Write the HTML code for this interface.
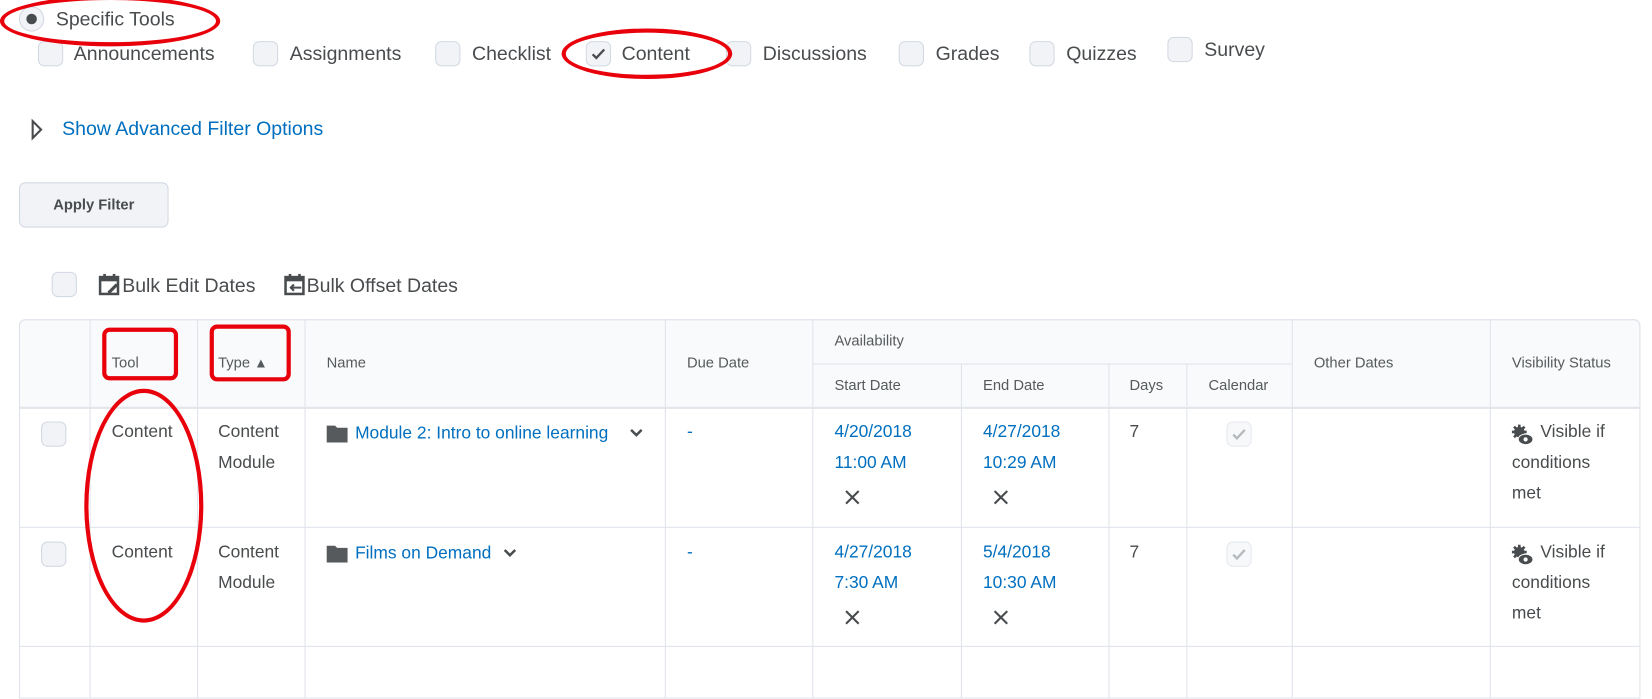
<!DOCTYPE html>
<html><head><meta charset="utf-8"><style>
*{margin:0;padding:0;box-sizing:border-box}
body{width:1652px;height:654px;background:#fff;position:relative;overflow:hidden;font-family:"Liberation Sans",sans-serif;color:#494c4e}
#w{position:absolute;left:0;top:0;width:1568px;height:621px;transform:scale(1.0536);transform-origin:0 0}
.a{position:absolute;white-space:nowrap}
.cb{position:absolute;width:24px;height:24px;border:1px solid #d3d9e3;border-radius:6px;background:#f1f3f6}
.t18{font-size:18.5px}
.h{font-size:14px;color:#565a5c}
.b{font-size:16.5px;line-height:29px}
.lk{color:#006fbf}
.vl{position:absolute;width:1px;background:#dfe3ea}
.hl{position:absolute;height:1px;background:#dfe3ea}
.red{position:absolute;border:4px solid #e8000b}
</style></head><body><div id="w">
<div class="a" style="left:18px;top:6px;width:24px;height:24px;border:1px solid #d3d9e3;border-radius:50%;background:#f1f3f6"></div>
<div class="a" style="left:25px;top:13px;width:10px;height:10px;border-radius:50%;background:#494c4e"></div>
<div class="a t18" style="left:53px;top:7px">Specific Tools</div>
<div class="cb" style="left:36px;top:39px"></div><div class="a t18" style="left:70px;top:40px">Announcements</div>
<div class="cb" style="left:240px;top:39px"></div><div class="a t18" style="left:275px;top:40px">Assignments</div>
<div class="cb" style="left:413px;top:39px"></div><div class="a t18" style="left:448px;top:40px">Checklist</div>
<div class="cb" style="left:556px;top:39px"></div>
<svg class="a" style="left:560px;top:43px" width="16" height="16" viewBox="0 0 16 16"><path d="M2.5 8.5l3.5 3.5 7.5-8" fill="none" stroke="#494c4e" stroke-width="2.2"/></svg>
<div class="a t18" style="left:590px;top:40px">Content</div>
<div class="cb" style="left:689px;top:39px"></div><div class="a t18" style="left:724px;top:40px">Discussions</div>
<div class="cb" style="left:853px;top:39px"></div><div class="a t18" style="left:888px;top:40px">Grades</div>
<div class="cb" style="left:977px;top:39px"></div><div class="a t18" style="left:1012px;top:40px">Quizzes</div>
<div class="cb" style="left:1108px;top:35px"></div><div class="a t18" style="left:1143px;top:36px">Survey</div>
<svg class="a" style="left:28px;top:112px" width="14" height="22" viewBox="0 0 14 22"><path d="M3 3l8 8-8 8z" fill="none" stroke="#494c4e" stroke-width="2"/></svg>
<div class="a t18 lk" style="left:59px;top:111px">Show Advanced Filter Options</div>
<div class="a" style="left:18px;top:173px;width:142px;height:43px;border:1px solid #d3d9e3;border-radius:6px;background:#f1f3f6;font-size:14px;font-weight:bold;text-align:center;line-height:41px;color:#494c4e">Apply Filter</div>
<div class="cb" style="left:49px;top:258px"></div>
<svg class="a" style="left:93px;top:259px" width="22" height="22" viewBox="0 0 22 22"><rect x="2" y="4" width="17" height="16" fill="none" stroke="#494c4e" stroke-width="2.4"/><rect x="2" y="4" width="17" height="4" fill="#494c4e"/><rect x="5" y="1" width="2.5" height="5" fill="#494c4e"/><rect x="14" y="1" width="2.5" height="5" fill="#494c4e"/><path d="M10 19l8-8" stroke="#494c4e" stroke-width="3"/></svg>
<div class="a t18" style="left:116px;top:260px">Bulk Edit Dates</div>
<svg class="a" style="left:269px;top:259px" width="22" height="22" viewBox="0 0 22 22"><rect x="2" y="4" width="17" height="16" fill="none" stroke="#494c4e" stroke-width="2.4"/><rect x="2" y="4" width="17" height="4" fill="#494c4e"/><rect x="5" y="1" width="2.5" height="5" fill="#494c4e"/><rect x="14" y="1" width="2.5" height="5" fill="#494c4e"/><path d="M7 14h10M10 11l-3 3 3 3" fill="none" stroke="#494c4e" stroke-width="2"/></svg>
<div class="a t18" style="left:291px;top:260px">Bulk Offset Dates</div>
<div class="a" style="left:18px;top:303px;width:1539px;height:84px;background:#f9fafb;border:1px solid #dfe3ea;border-radius:6px 6px 0 0"></div>
<div class="a" style="left:18px;top:303px;width:1539px;height:360px;border:1px solid #dfe3ea;border-radius:6px 6px 0 0"></div>
<div class="hl" style="left:18px;top:387px;width:1539px"></div>
<div class="hl" style="left:18px;top:500px;width:1539px"></div>
<div class="hl" style="left:18px;top:613px;width:1539px"></div>
<div class="hl" style="left:771px;top:345px;width:455px"></div>
<div class="vl" style="left:85px;top:303px;height:360px"></div>
<div class="vl" style="left:187px;top:303px;height:360px"></div>
<div class="vl" style="left:289px;top:303px;height:360px"></div>
<div class="vl" style="left:631px;top:303px;height:360px"></div>
<div class="vl" style="left:771px;top:303px;height:360px"></div>
<div class="vl" style="left:912px;top:345px;height:318px"></div>
<div class="vl" style="left:1052px;top:345px;height:318px"></div>
<div class="vl" style="left:1126px;top:345px;height:318px"></div>
<div class="vl" style="left:1226px;top:303px;height:360px"></div>
<div class="vl" style="left:1414px;top:303px;height:360px"></div>
<div class="a h" style="left:106px;top:336px">Tool</div>
<div class="a h" style="left:207px;top:336px">Type <span style="font-size:13px">&#9650;</span></div>
<div class="a h" style="left:310px;top:336px">Name</div>
<div class="a h" style="left:652px;top:336px">Due Date</div>
<div class="a h" style="left:792px;top:315px">Availability</div>
<div class="a h" style="left:792px;top:357px">Start Date</div>
<div class="a h" style="left:933px;top:357px">End Date</div>
<div class="a h" style="left:1072px;top:357px">Days</div>
<div class="a h" style="left:1147px;top:357px">Calendar</div>
<div class="a h" style="left:1247px;top:336px">Other Dates</div>
<div class="a h" style="left:1435px;top:336px">Visibility Status</div>
<div class="cb" style="left:39px;top:400px"></div>
<div class="cb" style="left:39px;top:514px"></div>
<div class="a b" style="left:106px;top:396px">Content</div>
<div class="a b" style="left:106px;top:510px">Content</div>
<div class="a b" style="left:207px;top:396px">Content<br>Module</div>
<div class="a b" style="left:207px;top:510px">Content<br>Module</div>
<svg class="a" style="left:310px;top:403px" width="20" height="17" viewBox="0 0 20 17"><path d="M0 1h8l2 2h10v14H0z" fill="#565a5c"/></svg>
<svg class="a" style="left:310px;top:517px" width="20" height="17" viewBox="0 0 20 17"><path d="M0 1h8l2 2h10v14H0z" fill="#565a5c"/></svg>
<div class="a b lk" style="left:337px;top:397px">Module 2: Intro to online learning</div>
<div class="a b lk" style="left:337px;top:511px">Films on Demand</div>
<svg class="a" style="left:597px;top:406px" width="14" height="10" viewBox="0 0 14 10"><path d="M2 2l5 5 5-5" fill="none" stroke="#494c4e" stroke-width="2.4"/></svg>
<svg class="a" style="left:477px;top:520px" width="14" height="10" viewBox="0 0 14 10"><path d="M2 2l5 5 5-5" fill="none" stroke="#494c4e" stroke-width="2.4"/></svg>
<div class="a b lk" style="left:652px;top:396px">-</div>
<div class="a b lk" style="left:652px;top:510px">-</div>
<div class="a b lk" style="left:792px;top:396px">4/20/2018<br>11:00 AM</div>
<div class="a b lk" style="left:933px;top:396px">4/27/2018<br>10:29 AM</div>
<div class="a b lk" style="left:792px;top:510px">4/27/2018<br>7:30 AM</div>
<div class="a b lk" style="left:933px;top:510px">5/4/2018<br>10:30 AM</div>
<svg class="a" style="left:802px;top:465px" width="14" height="14" viewBox="0 0 14 14"><path d="M1 1l12 12M13 1L1 13" stroke="#494c4e" stroke-width="2"/></svg>
<svg class="a" style="left:943px;top:465px" width="14" height="14" viewBox="0 0 14 14"><path d="M1 1l12 12M13 1L1 13" stroke="#494c4e" stroke-width="2"/></svg>
<svg class="a" style="left:802px;top:579px" width="14" height="14" viewBox="0 0 14 14"><path d="M1 1l12 12M13 1L1 13" stroke="#494c4e" stroke-width="2"/></svg>
<svg class="a" style="left:943px;top:579px" width="14" height="14" viewBox="0 0 14 14"><path d="M1 1l12 12M13 1L1 13" stroke="#494c4e" stroke-width="2"/></svg>
<div class="a b" style="left:1072px;top:396px">7</div>
<div class="a b" style="left:1072px;top:510px">7</div>
<div class="cb" style="left:1164px;top:400px;background:#f7f8fa;border-color:#e6e9ee"></div>
<svg class="a" style="left:1168px;top:404px" width="16" height="16" viewBox="0 0 16 16"><path d="M2.5 8.5l3.5 3.5 7.5-8" fill="none" stroke="#b5b9bd" stroke-width="2.2"/></svg>
<div class="cb" style="left:1164px;top:514px;background:#f7f8fa;border-color:#e6e9ee"></div>
<svg class="a" style="left:1168px;top:518px" width="16" height="16" viewBox="0 0 16 16"><path d="M2.5 8.5l3.5 3.5 7.5-8" fill="none" stroke="#b5b9bd" stroke-width="2.2"/></svg>
<svg class="a" style="left:1434px;top:402px" width="22" height="22" viewBox="0 0 22 22"><circle cx="8" cy="8" r="5" fill="#494c4e"/><path d="M8 1v14M1 8h14M3 3l10 10M13 3L3 13" stroke="#494c4e" stroke-width="2.5"/><ellipse cx="14" cy="15" rx="7" ry="5" fill="#494c4e" stroke="#fff" stroke-width="1"/><circle cx="14" cy="15" r="2" fill="#fff"/></svg>
<svg class="a" style="left:1434px;top:516px" width="22" height="22" viewBox="0 0 22 22"><circle cx="8" cy="8" r="5" fill="#494c4e"/><path d="M8 1v14M1 8h14M3 3l10 10M13 3L3 13" stroke="#494c4e" stroke-width="2.5"/><ellipse cx="14" cy="15" rx="7" ry="5" fill="#494c4e" stroke="#fff" stroke-width="1"/><circle cx="14" cy="15" r="2" fill="#fff"/></svg>
<div class="a b" style="left:1435px;top:396px"><span style="margin-left:27px">Visible if</span><br>conditions<br>met</div>
<div class="a b" style="left:1435px;top:510px"><span style="margin-left:27px">Visible if</span><br>conditions<br>met</div>
<div class="red" style="left:0px;top:-4px;width:209px;height:48px;border-radius:50%"></div>
<div class="red" style="left:533px;top:27px;width:162px;height:48px;border-radius:50%"></div>
<div class="red" style="left:97px;top:311px;width:72px;height:50px;border-radius:7px"></div>
<div class="red" style="left:199px;top:308px;width:77px;height:54px;border-radius:7px"></div>
<div class="red" style="left:80px;top:369px;width:113px;height:222px;border-radius:50%"></div>
</div></body></html>
